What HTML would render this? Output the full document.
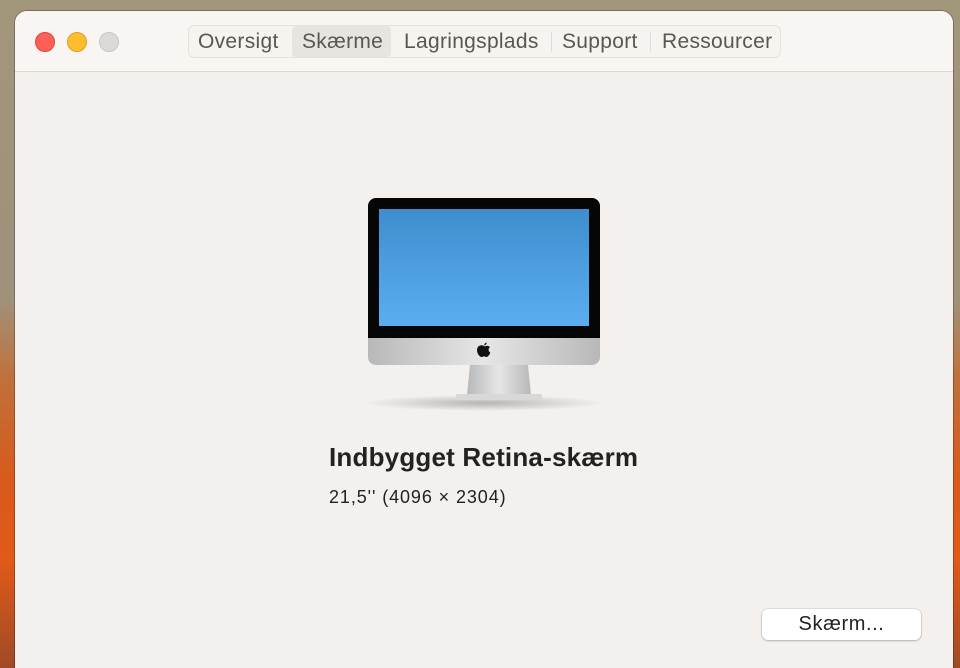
<!DOCTYPE html>
<html><head><meta charset="utf-8"><style>
*{margin:0;padding:0;box-sizing:border-box}
html{width:960px;height:668px;overflow:hidden}
body{width:960px;height:668px;overflow:hidden;position:relative;font-family:"Liberation Sans",sans-serif;
background:linear-gradient(180deg,#a2967b 0px,#a0917a 300px,#c0703a 380px,#d85a1c 480px,#e05a18 560px,#a04a28 668px)}
.win{position:absolute;left:15px;top:11px;width:938px;height:680px;border-radius:12px;background:#f4f0ed;overflow:hidden;box-shadow:0 0 0 1px rgba(0,0,0,.25)}
.tb{height:61px;background:#f8f5f2;border-bottom:1px solid #dcd8d4}
.dot{position:absolute;top:21px;width:20px;height:20px;border-radius:50%}
.tabs{position:absolute;left:173px;top:14px;width:593px;height:33px;border:1px solid #e6e2de;border-radius:6px;background:#f6f3f0;font-size:21px;letter-spacing:.3px;color:#5a5752}
.tab{position:absolute;top:0;height:31px;line-height:31px}
.sep{position:absolute;top:6px;width:1px;height:20px;background:#e0dcd8}
</style></head><body>
<div class="win">
<div class="tb"></div>
<div class="dot" style="left:20px;background:#fe5f57;border:1px solid #e0443e"></div>
<div class="dot" style="left:52px;background:#febc2e;border:1px solid #dea123"></div>
<div class="dot" style="left:84px;background:#dcd9d6;border:1px solid #c9c5c2"></div>
<div class="tabs">
<div class="tab" style="left:9px">Oversigt</div>
<div class="tab" style="left:103px;width:99px;background:#e8e4e0;border-radius:4px"></div>
<div class="tab" style="left:113px">Skærme</div>
<div class="tab" style="left:215px">Lagringsplads</div>
<div class="sep" style="left:362px"></div>
<div class="tab" style="left:373px">Support</div>
<div class="sep" style="left:461px"></div>
<div class="tab" style="left:473px">Ressourcer</div>
</div>
<svg style="position:absolute;left:340px;top:180px" width="260" height="230">
<defs>
<linearGradient id="s" x1="0" y1="0" x2="0" y2="1"><stop offset="0" stop-color="#3e8ecf"/><stop offset="1" stop-color="#5aaef0"/></linearGradient>
<linearGradient id="c" x1="0" y1="0" x2="1" y2="0"><stop offset="0" stop-color="#b8b8b8"/><stop offset=".5" stop-color="#e6e6e6"/><stop offset="1" stop-color="#b8b8b8"/></linearGradient>
<radialGradient id="sh"><stop offset="0" stop-color="rgba(0,0,0,.25)"/><stop offset="1" stop-color="rgba(0,0,0,0)"/></radialGradient>
</defs>
<ellipse cx="129" cy="212" rx="120" ry="8" fill="url(#sh)"/>
<path d="M115 174 H173 L176 204 H112 Z" fill="url(#c)"/>
<rect x="101" y="203" width="86" height="6" rx="2" fill="#d8d8d8"/>
<path d="M13 147 H245 V166 a8 8 0 0 1 -8 8 H21 a8 8 0 0 1 -8 -8 Z" fill="url(#c)"/>
<path d="M21 7 H237 a8 8 0 0 1 8 8 V147 H13 V15 a8 8 0 0 1 8 -8 Z" fill="#050505"/>
<rect x="24" y="18" width="210" height="117" fill="url(#s)"/>
<path d="M129 155 c-3 -2 -7 0 -7 4 c0 4 3 7 4.5 7 c1 0 1.5 -.6 2.5 -.6 c1 0 1.5 .6 2.5 .6 c1.5 0 3.5 -3 3.8 -4.5 c-2 -1 -2.4 -4 -.3 -5.3 c-1 -1.5 -3 -1.8 -4 -1.2 c-.8 .4 -1.3 .4 -2 0 Z M129.2 154.5 c0 -1.5 1 -2.8 2.4 -3 c.1 1.5 -1 2.8 -2.4 3 Z" fill="#111"/>
</svg>
<div style="position:absolute;left:314px;top:431px;font-size:26px;letter-spacing:.2px;font-weight:bold;color:#222">Indbygget Retina-skærm</div>
<div style="position:absolute;left:314px;top:476px;font-size:18px;letter-spacing:.9px;color:#222">21,5'' (4096 × 2304)</div>
<div style="position:absolute;left:747px;top:598px;width:159px;height:31px;background:#fff;border-radius:6px;box-shadow:0 0 0 .5px rgba(0,0,0,.15),0 1px 2px rgba(0,0,0,.2);text-align:center;line-height:31px;font-size:20px;letter-spacing:.6px;color:#222">Skærm...</div>
</div>
</body></html>
